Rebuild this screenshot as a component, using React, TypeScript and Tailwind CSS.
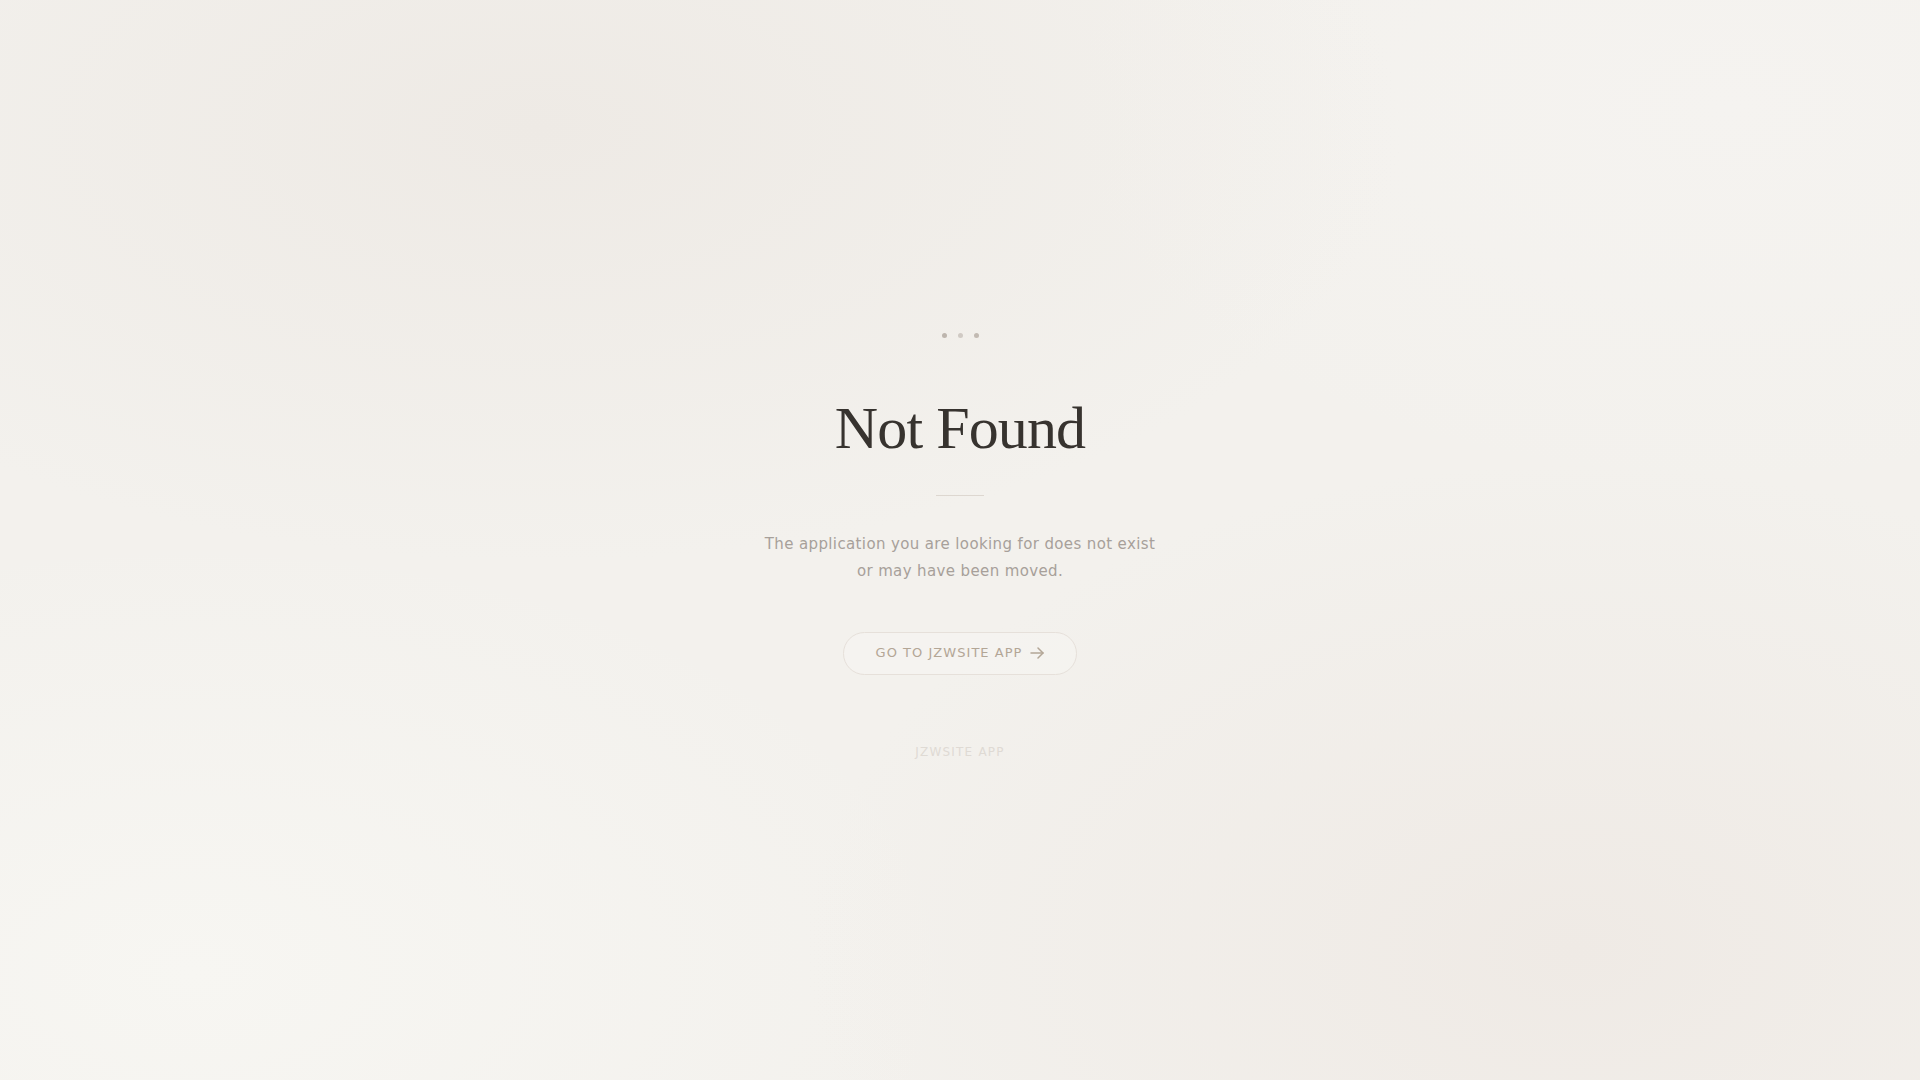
import type { ReactNode } from "react";

function Dot({ className = "" }: { className?: string }) {
  return <span className={`block h-[5px] w-[5px] rounded-full ${className}`} />;
}

function ArrowRight() {
  return (
    <svg width="14" height="12" viewBox="0 0 14 12" fill="none" stroke="currentColor" strokeWidth="1.5" strokeLinecap="round" strokeLinejoin="round">
      <path d="M1 6h12" />
      <path d="M8 1l5 5-5 5" />
    </svg>
  );
}

function Page({ children }: { children: ReactNode }) {
  return (
    <div className="flex min-h-screen w-full flex-col items-center justify-center bg-[#f3f1ed] bg-[radial-gradient(ellipse_45%_40%_at_28%_12%,#eeeae5_0%,transparent_100%),radial-gradient(ellipse_40%_45%_at_82%_88%,#efeae5_0%,transparent_100%),radial-gradient(ellipse_40%_40%_at_10%_90%,#f7f6f2_0%,transparent_100%),radial-gradient(ellipse_35%_35%_at_90%_10%,#f5f3f0_0%,transparent_100%)] pt-[12px]">
      {children}
    </div>
  );
}

export default function App() {
  return (
    <Page>
      <div className="flex flex-col items-center text-center">
        <div className="flex items-center gap-[11px]">
          <Dot className="bg-[#bdb5ad]" />
          <Dot className="bg-[#d0cac4]" />
          <Dot className="bg-[#c2bab2]" />
        </div>

        <h1 className="mt-[60px] font-['Liberation_Serif',serif] text-[60px] font-normal leading-none tracking-[-0.015em] text-[#37332f]">
          Not Found
        </h1>

        <div className="mt-[37px] h-px w-12 bg-[#ddd7d0]" />

        <p className="mt-[35px] font-['DejaVu_Sans',sans-serif] text-[15px] leading-[27px] tracking-wide text-[#a7a09a]">
          The application you are looking for does not exist
          <br />
          or may have been moved.
        </p>

        <a
          href="#"
          className="mt-[47px] inline-flex h-[43px] items-center gap-2 rounded-full border border-[#e6e0da] bg-white/20 px-8 font-['DejaVu_Sans',sans-serif] text-[13px] uppercase tracking-[0.08em] text-[#b3a696]"
        >
          <span>Go to JZWSite App</span>
          <ArrowRight />
        </a>

        <div className="mt-[69px] font-['DejaVu_Sans',sans-serif] text-[12px] leading-4 uppercase tracking-widest text-[#dfdad4]">
          JZWSite App
        </div>
      </div>
    </Page>
  );
}
